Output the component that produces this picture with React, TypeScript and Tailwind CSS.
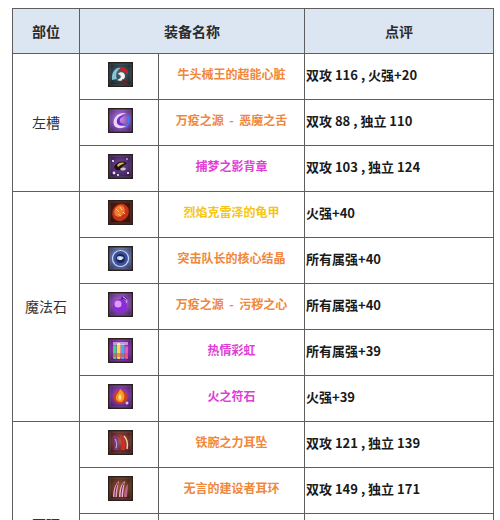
import React from "react";

type Item = {
  name: string;
  cls: string;
  score: string;
  icon: number;
  h?: string;
};

const FONT = { fontFamily: '"Noto Sans CJK SC", "Noto Sans", sans-serif' };

function Frame({ id, children, bg }: { id: string; children: React.ReactNode; bg: [string, string] }) {
  return (
    <svg width="25" height="25" viewBox="0 0 25 25" className="block">
      <defs>
        <radialGradient id={`bg${id}`} cx="50%" cy="45%" r="70%">
          <stop offset="0%" stopColor={bg[0]} />
          <stop offset="100%" stopColor={bg[1]} />
        </radialGradient>
      </defs>
      <rect x="0.5" y="0.5" width="24" height="24" fill={`url(#bg${id})`} />
      {children}
      <rect x="0.75" y="0.75" width="23.5" height="23.5" fill="none" stroke="#2a201c" strokeWidth="1.5" />
      <rect x="2" y="2" width="21" height="21" fill="none" stroke="#ffffff" strokeOpacity="0.25" strokeWidth="0.6" />
    </svg>
  );
}

function Icon({ n }: { n: number }) {
  switch (n) {
    case 1:
      return (
        <Frame id="1" bg={["#4d6a78", "#10181e"]}>
          <path d="M4 18 C3 10 8 5 13 6 C9 8 7 12 9 17 Z" fill="#9fe3ee" opacity="0.8" />
          <path d="M12 6 C17 4 21 8 20 13 C18 10 15 9 13 10 Z" fill="#c2232a" />
          <path d="M10 12 C12 9 17 10 17 14 C17 18 12 20 9 18 C12 17 14 15 12 13 Z" fill="#f2f2f2" />
          <path d="M14 17 C17 18 19 20 20 22 L15 22 Z" fill="#7a1a1a" />
        </Frame>
      );
    case 2:
      return (
        <Frame id="2" bg={["#c58df0", "#3b1663"]}>
          <path d="M18 5 C10 4 4 10 6 17 C8 21 14 21 19 18 C13 19 9 16 10 12 C11 8 15 6 18 5 Z" fill="#f1d2ff" />
          <path d="M17 7 C11 7 8 11 9 15 C10 18 14 18 17 16 C13 16 11 14 12 11 C13 9 15 8 17 7 Z" fill="#6a2ec9" />
          <path d="M20 8 C22 12 21 17 17 20" stroke="#3e7bff" strokeWidth="1.5" fill="none" />
        </Frame>
      );
    case 3:
      return (
        <Frame id="3" bg={["#7b4aa8", "#241036"]}>
          <circle cx="5" cy="7" r="1" fill="#fff" />
          <circle cx="19" cy="5" r="0.8" fill="#fff" />
          <circle cx="6" cy="19" r="1.4" fill="#e8dcff" />
          <circle cx="10" cy="21" r="1" fill="#fff" />
          <circle cx="20" cy="19" r="1.1" fill="#fff" />
          <path d="M6 13 C8 8 14 6 19 9 C17 11 14 12 12 16 C10 17 7 16 6 13 Z" fill="#1a1208" />
          <path d="M9 11 C11 8 15 8 17 9 C15 10 12 11 10 13 Z" fill="#e0b24a" />
          <path d="M12 15 C14 13 17 13 18 15 C16 17 14 17 12 15 Z" fill="#c9c9c9" />
        </Frame>
      );
    case 4:
      return (
        <Frame id="4" bg={["#6a2412", "#2a0c06"]}>
          <ellipse cx="12.5" cy="12.5" rx="8" ry="9" transform="rotate(35 12.5 12.5)" fill="#c2341c" />
          <ellipse cx="11.5" cy="11" rx="5" ry="6" transform="rotate(35 11.5 11)" fill="#ef7a2e" />
          <path d="M8 9 L11 12 M12 7 L14 10 M10 14 L13 16 M15 12 L17 14" stroke="#ffd08a" strokeWidth="1" />
        </Frame>
      );
    case 5:
      return (
        <Frame id="5" bg={["#9fb6e8", "#1c2450"]}>
          <circle cx="12.5" cy="12.5" r="8" fill="#3a4f9a" stroke="#c9d6ff" strokeWidth="1.2" />
          <circle cx="12.5" cy="12.5" r="4.5" fill="#1b2552" />
          <path d="M9 11 C11 9 15 10 16 12 C14 14 11 15 9 13 Z" fill="#b8c8f0" />
          <circle cx="12.5" cy="12.5" r="1.5" fill="#e8eeff" />
        </Frame>
      );
    case 6:
      return (
        <Frame id="6" bg={["#c27ae6", "#3a1560"]}>
          <circle cx="12" cy="14" r="7" fill="#8a2bd6" />
          <circle cx="10" cy="12" r="3.5" fill="#e09cff" />
          <path d="M13 6 C16 3 20 5 19 9 C17 7 15 7 13 8 Z" fill="#5a1a9c" />
          <path d="M15 5 C18 6 20 9 18 11" stroke="#f0c0ff" strokeWidth="1" fill="none" />
        </Frame>
      );
    case 7:
      return (
        <Frame id="7" bg={["#c84be0", "#3d1060"]}>
          <rect x="5" y="7" width="3.5" height="14" rx="1.5" fill="#3fd37a" />
          <rect x="9" y="5" width="3.5" height="16" rx="1.5" fill="#f5e04a" />
          <rect x="13" y="6" width="3.5" height="15" rx="1.5" fill="#4aa8f5" />
          <rect x="17" y="8" width="3" height="13" rx="1.5" fill="#f05aa0" />
          <rect x="5" y="15" width="15" height="4" fill="#e84040" opacity="0.5" />
          <rect x="5" y="4" width="15" height="3" fill="#ffffff" opacity="0.5" />
        </Frame>
      );
    case 8:
      return (
        <Frame id="8" bg={["#b05ad8", "#3a1058"]}>
          <circle cx="12.5" cy="13" r="7" fill="#c84020" />
          <path d="M12 5 C16 8 18 12 15 17 C13 19 9 18 8 15 C7 11 11 9 12 5 Z" fill="#f59a2a" />
          <path d="M12 10 C14 12 14 15 12 16 C10 15 10 12 12 10 Z" fill="#ffe07a" />
          <circle cx="19" cy="19" r="1.5" fill="#d0c8ff" />
        </Frame>
      );
    case 9:
      return (
        <Frame id="9" bg={["#b0584a", "#2e0d10"]}>
          <path d="M5 6 C7 10 7 16 6 20 L10 20 C11 15 10 10 8 6 Z" fill="#7a3a9a" />
          <path d="M11 5 C14 9 14 15 13 20 L17 20 C18 14 16 9 14 5 Z" fill="#d42a2a" />
          <path d="M16 6 C19 9 20 14 19 19" stroke="#f5d0a0" strokeWidth="1.5" fill="none" />
          <path d="M7 9 C9 12 9 15 8 18" stroke="#c8b0ff" strokeWidth="1" fill="none" />
        </Frame>
      );
    default:
      return (
        <Frame id="10" bg={["#9a5a3a", "#2a100a"]}>
          <path d="M5 21 C5 14 7 8 11 5 C10 10 9 15 9 21 Z" fill="#e8a0c0" />
          <path d="M11 21 C11 14 13 8 17 5 C16 10 15 15 15 21 Z" fill="#f0b8d0" />
          <path d="M16 21 C16 15 18 10 20 8 C20 13 19 17 19 21 Z" fill="#c06080" />
          <path d="M7 21 C7 15 8 10 10 7" stroke="#6a2050" strokeWidth="1" fill="none" />
          <path d="M13 21 C13 15 14 10 16 7" stroke="#6a2050" strokeWidth="1" fill="none" />
        </Frame>
      );
  }
}

const ORANGE = "text-[#f0873a]";
const MAGENTA = "text-[#e03fd6]";
const YELLOW = "text-[#f5c414]";

const groups: { label: string; items: Item[] }[] = [
  {
    label: "左槽",
    items: [
      { name: "牛头械王的超能心脏", cls: ORANGE, score: "双攻 116 , 火强+20", icon: 1 },
      { name: "万疫之源  -  恶魔之舌", cls: ORANGE, score: "双攻 88 , 独立 110", icon: 2 },
      { name: "捕梦之影背章", cls: MAGENTA, score: "双攻 103 , 独立 124", icon: 3 },
    ],
  },
  {
    label: "魔法石",
    items: [
      { name: "烈焰克雷泽的龟甲", cls: YELLOW, score: "火强+40", icon: 4 },
      { name: "突击队长的核心结晶", cls: ORANGE, score: "所有属强+40", icon: 5 },
      { name: "万疫之源  -  污秽之心", cls: ORANGE, score: "所有属强+40", icon: 6 },
      { name: "热情彩虹", cls: MAGENTA, score: "所有属强+39", icon: 7 },
      { name: "火之符石", cls: MAGENTA, score: "火强+39", icon: 8 },
    ],
  },
  {
    label: "耳环",
    items: [
      { name: "铁腕之力耳坠", cls: ORANGE, score: "双攻 121 , 独立 139", icon: 9 },
      { name: "无言的建设者耳环", cls: ORANGE, score: "双攻 149 , 独立 171", icon: 10 },
      { name: "", cls: ORANGE, score: "", icon: 0, h: "h-[114px]" },
    ],
  },
];

export default function App() {
  const cell = "border border-[#5e5e5e] p-0";
  return (
    <div className="w-[500px] h-[520px] overflow-hidden bg-white pt-[8px] pl-[12px]" style={FONT}>
      <table className="border-collapse w-[481px] table-fixed">
        <colgroup>
          <col className="w-[67px]" />
          <col className="w-[79px]" />
          <col className="w-[146px]" />
          <col className="w-[189px]" />
        </colgroup>
        <thead>
          <tr className="h-[45px] bg-[#dce6f2]">
            <th className={`${cell} text-[14px] font-bold text-[#2b2b2b]`}>部位</th>
            <th colSpan={2} className={`${cell} text-[14px] font-bold text-[#2b2b2b]`}>装备名称</th>
            <th className={`${cell} text-[14px] font-bold text-[#2b2b2b]`}>点评</th>
          </tr>
        </thead>
        <tbody>
          {groups.map((g) =>
            g.items.map((it, i) => (
              <tr key={g.label + i} className={it.h ?? "h-[46px]"}>
                {i === 0 && (
                  <td rowSpan={g.items.length} className={`${cell} text-center text-[14px] text-[#333333]`}>
                    {g.label}
                  </td>
                )}
                <td className={`${cell}`}>
                  {it.icon > 0 && (
                    <div className="flex justify-center items-center pb-[4px] pl-[2px]">
                      <Icon n={it.icon} />
                    </div>
                  )}
                </td>
                <td className={`${cell} text-center text-[12px] font-bold ${it.cls}`}>
                  {it.name && <div className="pb-[5px] whitespace-pre">{it.name}</div>}
                </td>
                <td className={`${cell} text-left text-[13px] font-bold text-[#1a1a1a]`}>
                  {it.score && <div className="pl-[1px] pb-[3px] whitespace-pre">{it.score}</div>}
                </td>
              </tr>
            ))
          )}
        </tbody>
      </table>
    </div>
  );
}
